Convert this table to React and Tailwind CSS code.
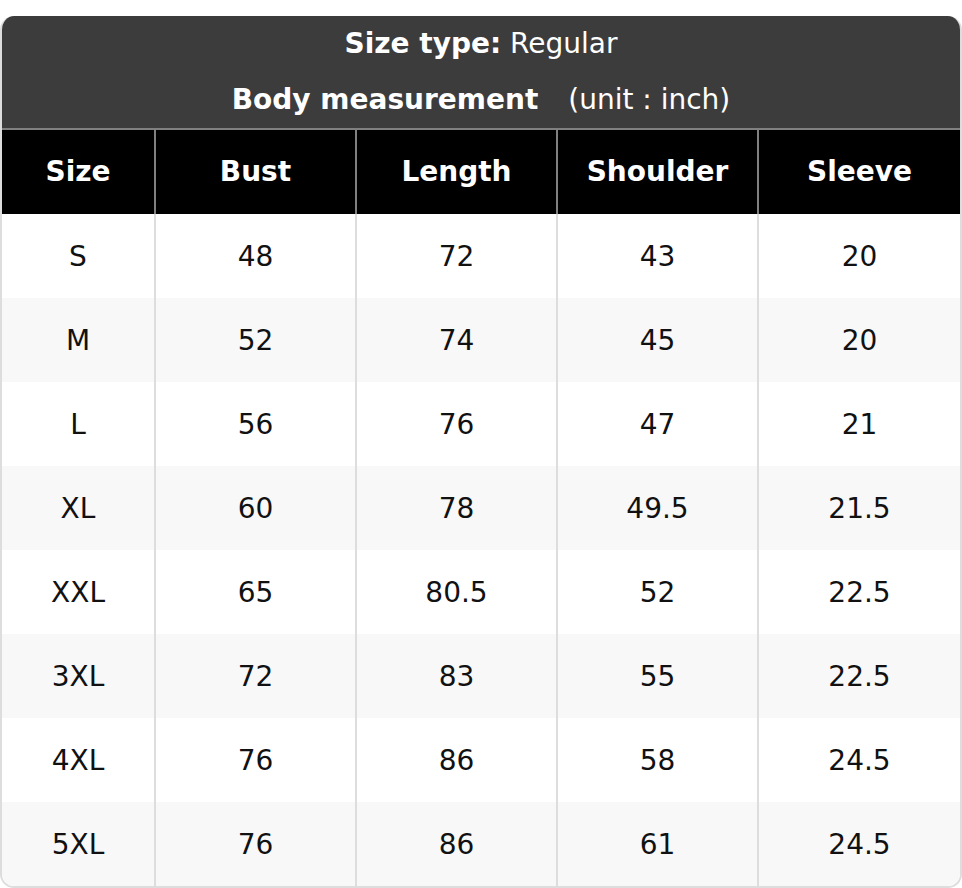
const columns = ['Size', 'Bust', 'Length', 'Shoulder', 'Sleeve'];

const rows = [
  ['S', '48', '72', '43', '20'],
  ['M', '52', '74', '45', '20'],
  ['L', '56', '76', '47', '21'],
  ['XL', '60', '78', '49.5', '21.5'],
  ['XXL', '65', '80.5', '52', '22.5'],
  ['3XL', '72', '83', '55', '22.5'],
  ['4XL', '76', '86', '58', '24.5'],
  ['5XL', '76', '86', '61', '24.5'],
];

const gridCols = 'grid grid-cols-[152px_201px_201px_201px_1fr]';

export default function App() {
  return (
    <div className="bg-white min-h-[888px] pt-[16px] font-['DejaVu_Sans',sans-serif] text-[28px]">
      <div className="w-[962px] rounded-[14px] overflow-hidden border-x-2 border-b-2 border-[#dddddd]">
        {/* title block */}
        <div className="bg-[#3c3c3c] text-white flex flex-col items-center pt-[11px] pb-[11px] gap-[22px] -mx-[2px]">
          <div className="leading-[34px]">
            <span className="font-bold">Size type:</span> Regular
          </div>
          <div className="leading-[34px]">
            <span className="font-bold">Body measurement</span>
            <span className="ml-[30px]">(unit : inch)</span>
          </div>
        </div>
        <div className="h-[2px] bg-[#808080] -mx-[2px]" />

        {/* column header */}
        <div className={`${gridCols} bg-black text-white font-bold -ml-[2px] pl-[2px]`}>
          {columns.map((c, i) => (
            <div
              key={c}
              className={`h-[84px] flex items-center justify-center ${i > 0 ? 'border-l-2 border-[#808080]' : ''}`}
            >
              {c}
            </div>
          ))}
        </div>

        {/* body */}
        {rows.map((r, ri) => (
          <div key={r[0]} className={`${gridCols} text-[#111111] ${ri % 2 === 1 ? 'bg-[#f8f8f8]' : 'bg-white'}`}>
            {r.map((v, i) => (
              <div
                key={i}
                className={`h-[84px] pt-[2px] flex items-center justify-center ${i > 0 ? 'border-l-2 border-[#dddddd]' : ''}`}
              >
                {v}
              </div>
            ))}
          </div>
        ))}
      </div>
    </div>
  );
}
